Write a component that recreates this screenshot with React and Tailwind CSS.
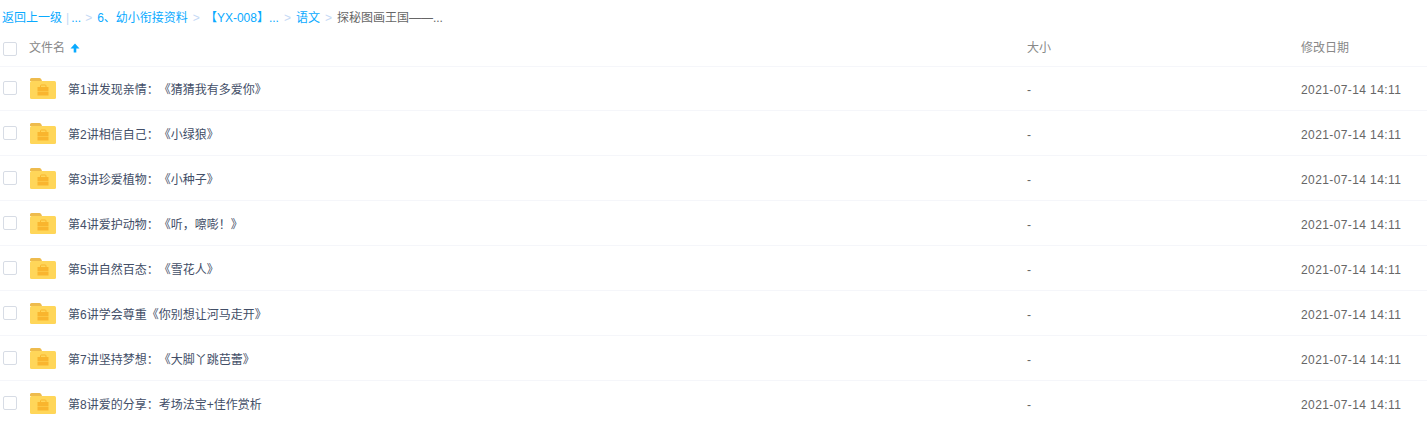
const rows = [
  "第1讲发现亲情：《猜猜我有多爱你》",
  "第2讲相信自己：《小绿狼》",
  "第3讲珍爱植物：《小种子》",
  "第4讲爱护动物：《听，嚓嘭！》",
  "第5讲自然百态：《雪花人》",
  "第6讲学会尊重《你别想让河马走开》",
  "第7讲坚持梦想：《大脚丫跳芭蕾》",
  "第8讲爱的分享：考场法宝+佳作赏析",
];

function FolderIcon() {
  return (
    <svg width="26" height="21" viewBox="0 0 26 21" className="mt-[1px] shrink-0">
      <path d="M0 1.5A1.5 1.5 0 0 1 1.500 0H9.500C10.500 0 11.500 1 12 3H0Z" fill="#eebb4d" />
      <rect x="0" y="3" width="26" height="18" rx="1.500" fill="#ffd659" />
      <path d="M10.500 9V7.800C10.500 7.200 11 7 11.500 7H15C15.500 7 16 7.200 16 7.800V9" fill="none" stroke="#f9b52e" strokeWidth="1" />
      <rect x="7.500" y="9" width="11" height="4" fill="#f9b52e" />
      <rect x="7.500" y="13.500" width="11" height="4" fill="#f9b52e" />
    </svg>
  );
}

function Checkbox({ className = "" }) {
  return <div className={`h-[14px] w-[14px] shrink-0 rounded-[2px] border border-[#d7dce5] bg-white ${className}`} />;
}

function Sep() {
  return <span className="mx-[5px] text-[#c5d9f5]">&gt;</span>;
}

export default function App() {
  return (
    <div className="h-[425px] w-[1427px] overflow-hidden bg-white text-[12px] text-[#424e67] [font-family:'Liberation_Sans','Noto_Sans_CJK_SC',sans-serif] [text-spacing-trim:space-all]">
      {/* 面包屑 */}
      <div className="flex h-[30px] items-center pl-[2px] pt-[6px] text-[#09aaff]">
        <span>返回上一级</span>
        <span className="ml-[4px] mr-[2px] text-[#c5d9f5]">|</span>
        <span className="mr-[-1px]">...</span>
        <Sep />
        <span>6、幼小衔接资料</span>
        <Sep />
        <span>【YX-008】...</span>
        <Sep />
        <span>语文</span>
        <Sep />
        <span className="text-[#666]">探秘图画王国——...</span>
      </div>

      {/* 表头 */}
      <div className="flex h-[36px] items-center pl-[3px] text-[#888] shadow-[0_1px_0_#f5f6fa]">
        <Checkbox className="mt-[2px]" />
        <div className="ml-[12px] flex w-[998px] items-center gap-[5px]">
          <span>文件名</span>
          <svg width="10" height="10" viewBox="0 0 10 10">
            <path d="M5 0.500 9.500 5.500H6.300V9.500H3.700V5.500H0.500Z" fill="#09aaff" />
          </svg>
        </div>
        <div className="w-[274px]">大小</div>
        <div>修改日期</div>
      </div>

      {/* 文件列表 */}
      {rows.map((name) => (
        <div key={name} className="flex h-[45px] items-center border-b border-[#f5f6fa] pl-[3px]">
          <Checkbox />
          <div className="ml-[13px] flex w-[997px] items-center gap-[12px]">
            <FolderIcon />
            <span className="pt-[3px]">{name}</span>
          </div>
          <div className="w-[274px] pt-[3px] text-[#666]">-</div>
          <div className="pt-[3px] tracking-[0.4px] text-[#666]">2021-07-14 14:11</div>
        </div>
      ))}
    </div>
  );
}
